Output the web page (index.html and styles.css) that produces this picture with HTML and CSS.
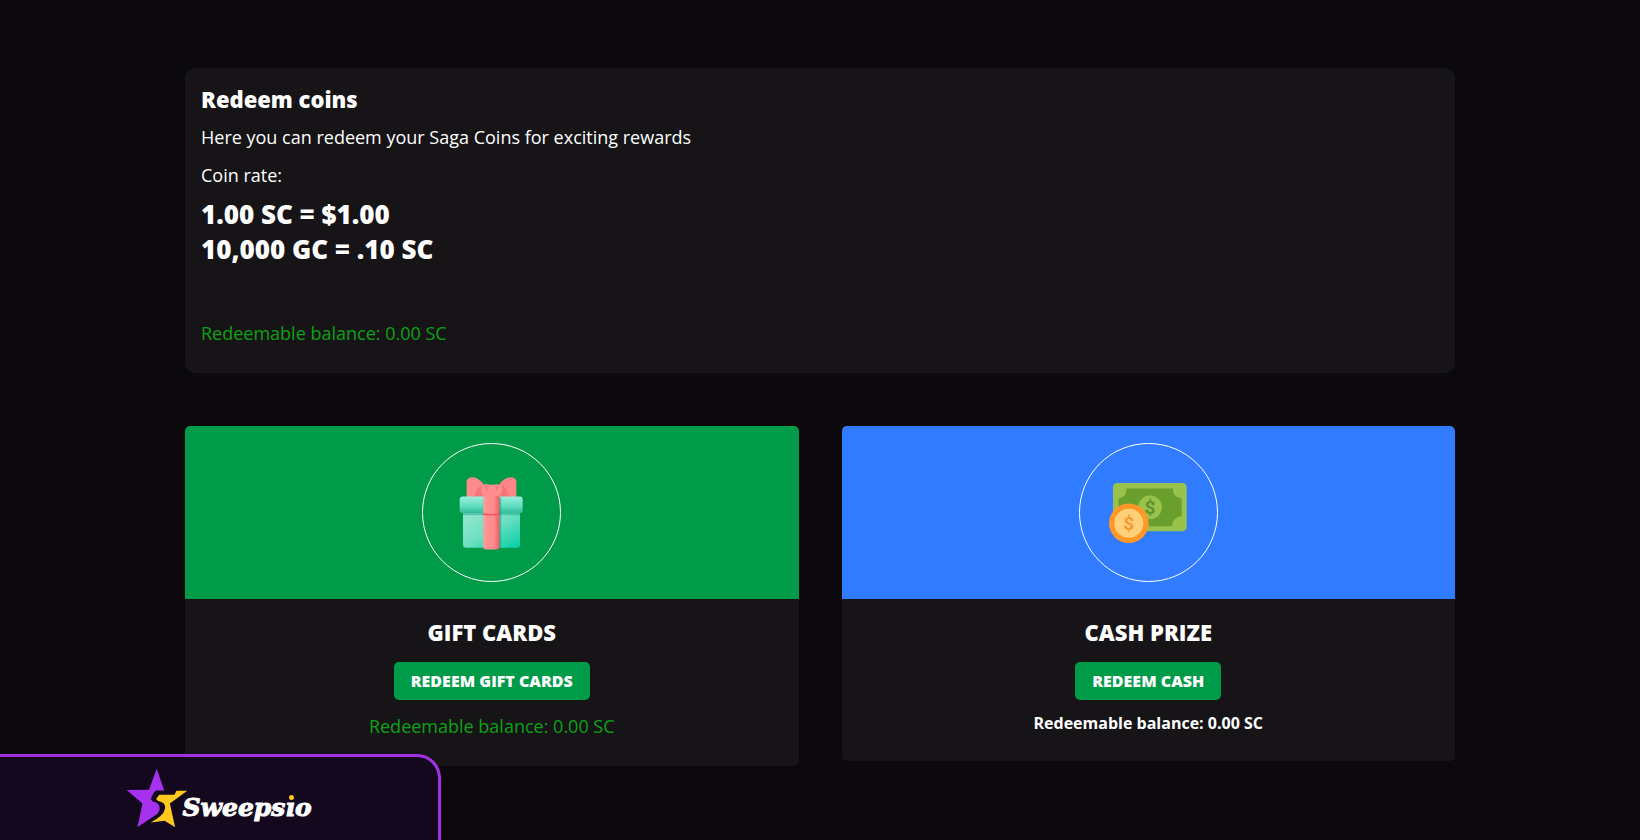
FILE: index.html
```html
<!DOCTYPE html>
<html lang="en">
<head>
    <meta charset="UTF-8">
    <meta name="viewport" content="width=device-width, initial-scale=1.0">
    <title>Redeem coins</title>
    <link rel="stylesheet" href="styles.css">
</head>
<body>
    <main class="container">
        <section class="panel">
            <h1 class="panel-title">Redeem coins</h1>
            <p class="panel-text">Here you can redeem your Saga Coins for exciting rewards</p>
            <p class="panel-text">Coin rate:</p>
            <p class="rate">1.00 SC = $1.00<br>10,000 GC = .10 SC</p>
            <p class="balance">Redeemable balance: 0.00 SC</p>
        </section>

        <div class="cards">
            <section class="card">
                <div class="card-header card-header-green">
                    <div class="circle">
                        <svg width="65" height="74" viewBox="144 140 196 222" aria-hidden="true">
                            <defs>
                                <linearGradient id="box" x1="0" y1="0" x2="1" y2="1">
                                    <stop offset="0" stop-color="#9ae8d0"/>
                                    <stop offset="0.5" stop-color="#6fdfc2"/>
                                    <stop offset="1" stop-color="#00cfa5"/>
                                </linearGradient>
                                <linearGradient id="lid" x1="0" y1="0" x2="0" y2="1">
                                    <stop offset="0" stop-color="#9af0dc"/>
                                    <stop offset="0.6" stop-color="#5fdcc0"/>
                                    <stop offset="1" stop-color="#2fb997"/>
                                </linearGradient>
                                <linearGradient id="ribbon" x1="0" y1="0" x2="1" y2="0">
                                    <stop offset="0" stop-color="#ff9c9c"/>
                                    <stop offset="0.7" stop-color="#ff8688"/>
                                    <stop offset="1" stop-color="#f0595f"/>
                                </linearGradient>
                            </defs>
                            <path d="M156 245H328V346Q328 356 318 356H166Q156 356 156 346Z" fill="url(#box)"/>
                            <path d="M156 252H328V258H156Z" fill="#20a888" opacity="0.5"/>
                            <path d="M167 204V157Q168 143 187 143Q200 144 213 158Q222 162 218 204Z" fill="#ff8b8e"/>
                            <path d="M317 204V157Q316 143 300 143Q284 144 271 158Q262 162 266 204Z" fill="#ff8588"/>
                            <path d="M190 204Q196 176 214 166L218 204Z" fill="#ec676c" opacity="0.6"/>
                            <path d="M296 204Q290 176 272 166L266 204Z" fill="#ec676c" opacity="0.6"/>
                            <rect x="146" y="201" width="190" height="51" rx="9" fill="url(#lid)"/>
                            <path d="M217 190H266V354Q264 361 254 361H226Q217 360 217 354Z" fill="url(#ribbon)"/>
                            <path d="M217 251Q242 257 266 251V257Q242 260 217 257Z" fill="#f2595c"/>
                            <path d="M266 204H271V355H266Z" fill="#128d72" opacity="0.5"/>
                            <path d="M211 176Q214 161 232 164Q242 168 254 164Q272 163 275 178Q275 190 266 200H217Q211 188 211 176Z" fill="#ff8d90"/>
                            <path d="M226 171L229 182M260 171L256 182" stroke="#ee6b70" stroke-width="3" stroke-linecap="round"/>
                        </svg>
                    </div>
                </div>
                <div class="card-body">
                    <h2 class="card-title">GIFT CARDS</h2>
                    <button class="btn" type="button">REDEEM GIFT CARDS</button>
                    <p class="card-balance">Redeemable balance: 0.00 SC</p>
                </div>
            </section>

            <section class="card">
                <div class="card-header card-header-blue">
                    <div class="circle">
                        <svg width="80" height="62" viewBox="112 158 242 186" aria-hidden="true">
                            <rect x="127" y="160" width="223" height="146" rx="13" fill="#98c24c"/>
                            <path d="M167 177H309Q306 202 335 207V261Q307 264 305 291H144V207Q171 202 167 177Z" fill="#6a9f2e"/>
                            <circle cx="239" cy="234" r="36" fill="#98c24c"/>
                            <text class="note-sign" x="239" y="255" text-anchor="middle">$</text>
                            <circle cx="175" cy="282" r="60" fill="#ff9826"/>
                            <circle cx="175" cy="282" r="44" fill="#ffd078"/>
                            <text class="coin-sign" x="175" y="303" text-anchor="middle">$</text>
                        </svg>
                    </div>
                </div>
                <div class="card-body">
                    <h2 class="card-title">CASH PRIZE</h2>
                    <button class="btn" type="button">REDEEM CASH</button>
                    <p class="card-balance-bold">Redeemable balance: 0.00 SC</p>
                </div>
            </section>
        </div>
    </main>

    <aside class="brand">
        <svg width="62" height="60" viewBox="45 36 188 182" aria-hidden="true">
            <path d="M138 38L161 104H136Q128 109 121 128Q121 137 131 139Q146 143 147 157Q147 169 136 178L80 215L95 144L47 103L115 102Z" fill="#a632f0"/>
            <path d="M136 130L146 117H192L198 105H231L178 144L194 216L162 196L120 201Q158 181 163 161Q166 143 152 139Q141 137 136 130Z" fill="#ffc81e"/>
        </svg>
        <span class="brand-name">Sweeps<span class="brand-i">ı</span>o</span>
    </aside>
</body>
</html>
```
FILE: styles.css
```css
* {
    box-sizing: border-box;
}
body {
    margin: 0;
    background: #0b090c;
    color: #fff;
    font-family: "Open Sans", "Noto Sans", sans-serif;
    font-size: 18px;
    line-height: 24px;
}
h1, h2, p {
    margin: 0;
}
.container {
    max-width: 1302px;
    margin: 0 auto;
    padding: 68px 16px 72px;
}
.panel {
    background: #161417;
    border-radius: 10px;
    padding: 19px 16px 28px;
    margin-bottom: 53px;
}
.panel-title {
    font-size: 22px;
    font-weight: 800;
    line-height: 24px;
    margin-bottom: 14px;
}
.panel-text {
    margin-bottom: 14px;
}
.panel-text + .panel-text {
    margin-bottom: 10px;
}
.rate {
    font-size: 26px;
    font-weight: 800;
    line-height: 35px;
    margin-bottom: 54px;
}
.balance, .card-balance {
    color: #0ca214;
}
.cards {
    display: flex;
    align-items: flex-start;
    gap: 43px;
}
.card {
    flex: 1;
    background: #161417;
    border-radius: 5px;
    overflow: hidden;
}
.card-header {
    display: flex;
    justify-content: center;
    padding: 17px;
}
.card-header-green {
    background: #009b48;
}
.card-header-blue {
    background: #307bff;
}
.circle {
    display: flex;
    align-items: center;
    justify-content: center;
    width: 139px;
    height: 139px;
    border: 1px solid #fff;
    border-radius: 50%;
}
.note-sign, .coin-sign {
    font-family: Roboto, sans-serif;
    font-size: 58px;
    font-weight: 700;
}
.note-sign {
    fill: #5f932c;
}
.coin-sign {
    fill: #f79a33;
}
.card-body {
    display: flex;
    flex-direction: column;
    align-items: center;
    padding: 21px 16px 28px;
}
.card-title {
    font-size: 22px;
    font-weight: 800;
    line-height: 24px;
    margin-bottom: 18px;
}
.btn {
    background: #009b48;
    color: #fff;
    border: 0;
    border-radius: 5px;
    padding: 7px 17px;
    font-family: inherit;
    font-size: 16px;
    font-weight: 800;
    line-height: 24px;
    margin-bottom: 14px;
    cursor: pointer;
}
.card-balance-bold {
    font-size: 16px;
    font-weight: 700;
    line-height: 19px;
}
/* brand tab pinned to the bottom left corner */
.brand {
    position: fixed;
    left: 0;
    bottom: 0;
    display: flex;
    justify-content: center;
    width: 441px;
    height: 86px;
    padding: 11px 0 0;
    background: #13081e;
    border: 3px solid #a032e4;
    border-left: 0;
    border-bottom: 0;
    border-top-right-radius: 24px;
}
.brand-name {
    font-family: "DejaVu Serif", serif;
    font-size: 25px;
    font-weight: 700;
    font-style: italic;
    line-height: 40px;
    padding-top: 20px;
    margin-left: -6px;
    -webkit-text-stroke: 1px #fff;
}
.brand-i {
    position: relative;
}
.brand-i::after {
    content: "";
    position: absolute;
    top: 2px;
    left: 4px;
    width: 5px;
    height: 5px;
    border-radius: 50%;
    background: #ffc81e;
}
```
